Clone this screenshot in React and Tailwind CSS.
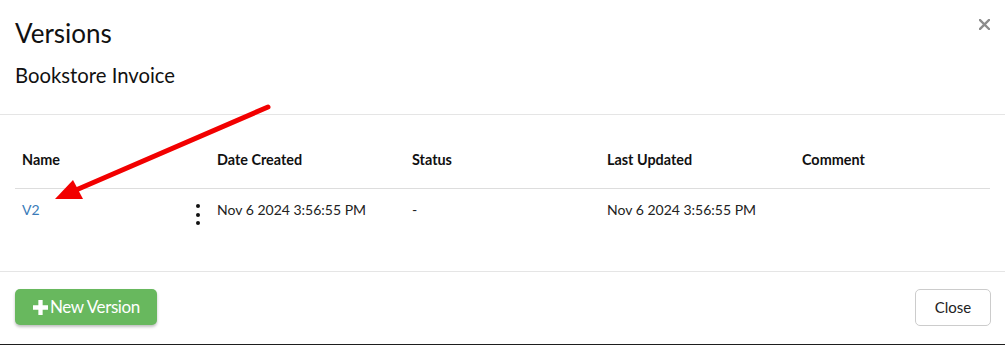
import React from 'react';

const columns = ['Name', 'Date Created', 'Status', 'Last Updated', 'Comment'];

const versions = [
  { name: 'V2', created: 'Nov 6 2024 3:56:55 PM', status: '-', updated: 'Nov 6 2024 3:56:55 PM', comment: '' },
];

const KebabDots = () => (
  <div className="flex flex-col items-center gap-[4.5px] pt-[4px]">
    <span className="block w-[4px] h-[4px] rounded-full bg-[#111]" />
    <span className="block w-[4px] h-[4px] rounded-full bg-[#111]" />
    <span className="block w-[4px] h-[4px] rounded-full bg-[#111]" />
  </div>
);

const App = () => {
  return (
    <div
      className="relative w-[1005px] h-[345px] bg-white text-[#222] border-b border-[#1e1e1e] overflow-hidden"
      style={{ fontFamily: 'Lato, "Open Sans", sans-serif' }}
    >
      {/* Header */}
      <div className="relative h-[115px] px-[15px] pt-[15px] border-b border-[#e5e5e5]">
        <h4 className="text-[26px] leading-[36px] text-[#111]">Versions</h4>
        <p className="mt-[12px] text-[20.3px] leading-[24px] text-[#111]">Bookstore Invoice</p>
        <button className="absolute right-[14px] top-[18px] w-[13px] h-[13px] flex items-center justify-center">
          <svg width="11" height="11" viewBox="0 0 11 11">
            <path d="M1 1 L10 10 M10 1 L1 10" stroke="#8c8c8c" strokeWidth="2.4" strokeLinecap="square" />
          </svg>
        </button>
      </div>

      {/* Body */}
      <div className="px-[15px] pt-[27px] h-[157px] border-b border-[#e5e5e5]">
        <table className="w-full table-fixed border-collapse text-[14px] leading-[20px]">
          <thead>
            <tr className="border-b border-[#dddddd]">
              {columns.map((col) => (
                <th key={col} className="text-left font-bold text-[14.4px] text-[#111] pl-[7px] pt-[8px] pb-[18px]">
                  {col}
                </th>
              ))}
            </tr>
          </thead>
          <tbody>
            {versions.map((v) => (
              <tr key={v.name}>
                <td className="pl-[7px] pr-[10px] pt-[11px] pb-[11px] align-top">
                  <div className="flex items-start justify-between">
                    <a className="text-[#3a7bb8]">{v.name}</a>
                    <KebabDots />
                  </div>
                </td>
                <td className="pl-[7px] pt-[11px] pb-[11px] align-top text-[#222]">{v.created}</td>
                <td className="pl-[7px] pt-[11px] pb-[11px] align-top text-[#222]">{v.status}</td>
                <td className="pl-[7px] pt-[11px] pb-[11px] align-top text-[#222]">{v.updated}</td>
                <td className="pl-[7px] pt-[11px] pb-[11px] align-top text-[#222]">{v.comment}</td>
              </tr>
            ))}
          </tbody>
        </table>
      </div>

      {/* Footer */}
      <div className="flex items-start justify-between px-[15px] pt-[17px]">
        <button className="flex items-center h-[36px] w-[142px] pl-[18px] rounded-[5px] bg-[#68b85e] text-white text-[17px] shadow-[0_2px_3px_rgba(0,0,0,0.25)]">
          <svg width="15" height="15" viewBox="0 0 14 14" className="mr-[2px]">
            <path d="M5 0 H9 V5 H14 V9 H9 V14 H5 V9 H0 V5 H5 Z" fill="#fff" />
          </svg>
          <span className="tracking-[-0.4px]">New Version</span>
        </button>
        <button className="h-[37px] w-[76px] mr-[-1px] rounded-[5px] border border-[#cccccc] bg-white text-[15px] text-[#222]">
          Close
        </button>
      </div>

      {/* Annotation arrow */}
      <svg className="absolute left-0 top-0 pointer-events-none" width="1005" height="345">
        <line x1="268" y1="107" x2="76" y2="190" stroke="#f20000" strokeWidth="5" strokeLinecap="round" />
        <polygon points="55,199 83,199 73,180" fill="#f20000" />
      </svg>
    </div>
  );
};

export default App;
